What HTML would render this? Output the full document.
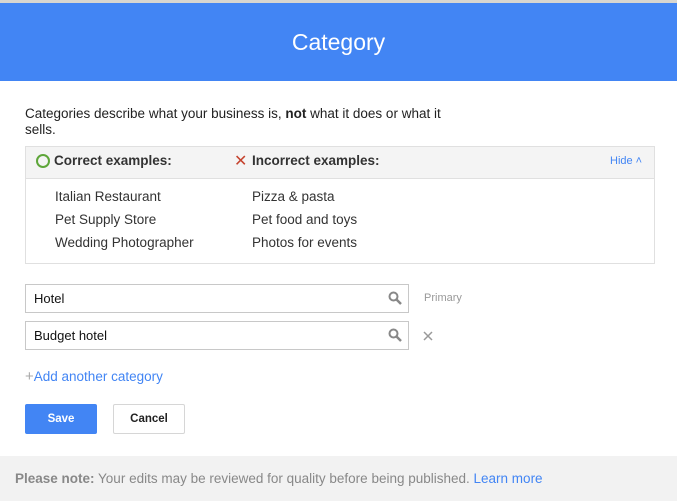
<!DOCTYPE html><html><head><style>
body{margin:0;width:677px;height:501px;position:relative;font-family:"Liberation Sans",sans-serif;background:#fff;overflow:hidden}
.a{position:absolute}
</style></head><body>
<div class="a" style="left:0;top:0;width:677px;height:3px;background:#d8d6d0"></div>
<div class="a" style="left:0;top:3px;width:677px;height:78px;background:#4285f4;color:#fff;font-size:23px;text-align:center;line-height:78px">Category</div>
<div class="a" style="left:25px;top:106px;width:440px;font-size:13.5px;line-height:16px;color:#222">Categories describe what your business is, <b>not</b> what it does or what it sells.</div>
<div class="a" style="left:25px;top:146px;width:628px;height:116px;border:1px solid #e0e0e0;background:#fff"></div>
<div class="a" style="left:26px;top:147px;width:628px;height:31px;background:#f4f4f4;border-bottom:1px solid #e0e0e0"></div>
<div class="a" style="left:36px;top:154px;width:10px;height:10px;border:2px solid #5ea63a;border-radius:50%"></div>
<div class="a" style="left:54px;top:153px;font-size:13.5px;font-weight:bold;color:#333">Correct examples:</div>
<div class="a" style="left:234px;top:151px;font-size:16px;color:#c5432e">✕</div>
<div class="a" style="left:252px;top:153px;font-size:13.5px;font-weight:bold;color:#333">Incorrect examples:</div>
<div class="a" style="left:610px;top:155px;font-size:11px;color:#4285f4">Hide ˄</div>
<div class="a" style="left:55px;top:185px;font-size:13.5px;line-height:23px;color:#333">Italian Restaurant<br>Pet Supply Store<br>Wedding Photographer</div>
<div class="a" style="left:252px;top:185px;font-size:13.5px;line-height:23px;color:#333">Pizza &amp; pasta<br>Pet food and toys<br>Photos for events</div>
<div class="a" style="left:25px;top:284px;width:382px;height:27px;border:1px solid #c8c8c8"><span class="a" style="left:8px;top:6px;font-size:13px;color:#111">Hotel</span><svg class="a" style="left:362px;top:6px" width="14" height="14"><circle cx="5.5" cy="5.5" r="4" stroke="#888" stroke-width="2" fill="none"/><path d="M8.5 8.5L13 13" stroke="#888" stroke-width="2.5"/></svg></div>
<div class="a" style="left:424px;top:292px;font-size:11px;color:#999">Primary</div>
<div class="a" style="left:25px;top:321px;width:382px;height:27px;border:1px solid #c8c8c8"><span class="a" style="left:8px;top:6px;font-size:13px;color:#111">Budget hotel</span><svg class="a" style="left:362px;top:6px" width="14" height="14"><circle cx="5.5" cy="5.5" r="4" stroke="#888" stroke-width="2" fill="none"/><path d="M8.5 8.5L13 13" stroke="#888" stroke-width="2.5"/></svg></div>
<svg class="a" style="left:423px;top:331px" width="10" height="10"><path d="M1 1L9 9M9 1L1 9" stroke="#999" stroke-width="1.5"/></svg>
<div class="a" style="left:25px;top:368px;font-size:13.5px;color:#4285f4"><span style="color:#aaa;font-size:15px">+</span>Add another category</div>
<div class="a" style="left:25px;top:404px;width:72px;height:30px;background:#4285f4;border-radius:2px;color:#fff;font-size:11.5px;font-weight:bold;text-align:center;line-height:30px">Save</div>
<div class="a" style="left:113px;top:404px;width:70px;height:28px;border:1px solid #d6d6d6;border-radius:2px;color:#222;font-size:11.5px;font-weight:bold;text-align:center;line-height:28px">Cancel</div>
<div class="a" style="left:0;top:456px;width:677px;height:45px;background:#f2f2f2"></div>
<div class="a" style="left:15px;top:471px;font-size:13.5px;color:#888"><b>Please note:</b> Your edits may be reviewed for quality before being published. <span style="color:#4285f4">Learn more</span></div>
</body></html>
